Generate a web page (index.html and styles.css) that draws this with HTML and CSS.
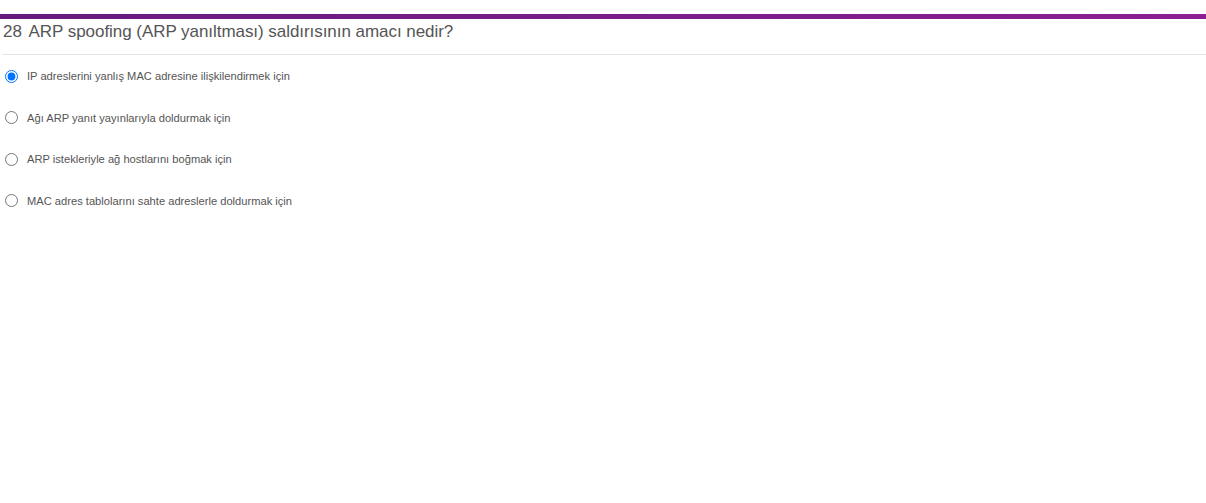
FILE: index.html
```html
<!DOCTYPE html>
<html lang="tr">
<head>
<meta charset="utf-8">
<title>Soru 28</title>
<link rel="stylesheet" href="styles.css">
</head>
<body>
<div class="page">
  <div class="topbar"></div>
  <div class="question">
    <h2 class="q-title"><span class="q-num">28</span> ARP spoofing (ARP yanıltması) saldırısının amacı nedir?</h2>
    <ul class="options">
      <li class="option"><label><input type="radio" name="q28" checked><span>IP adreslerini yanlış MAC adresine ilişkilendirmek için</span></label></li>
      <li class="option"><label><input type="radio" name="q28"><span>Ağı ARP yanıt yayınlarıyla doldurmak için</span></label></li>
      <li class="option"><label><input type="radio" name="q28"><span>ARP istekleriyle ağ hostlarını boğmak için</span></label></li>
      <li class="option"><label><input type="radio" name="q28"><span>MAC adres tablolarını sahte adreslerle doldurmak için</span></label></li>
    </ul>
  </div>
</div>
</body>
</html>
```
FILE: styles.css
```css
html, body {
  margin: 0;
  padding: 0;
  background: #fff;
}
body {
  font-family: "Liberation Sans", Arial, sans-serif;
  color: #555;
}
.page {
  padding-top: 14px;
}
.topbar {
  height: 5px;
  background: linear-gradient(to right, #661a7e, #8b1e93);
}
.question {
  padding-left: 2px;
}
.q-title {
  margin: 0;
  padding: 3px 0 0 1px;
  height: 32px;
  font-size: 17px;
  font-weight: normal;
  letter-spacing: -0.05px;
  color: #555;
  line-height: 20px;
  border-bottom: 1px solid #e6e6e6;
}
.q-num {
  margin-right: 3px;
}
.options {
  list-style: none;
  margin: 0;
  padding: 0;
}
.option {
  height: 41.5px;
}
.option:first-child {
  margin-top: 11px;
}
.option label {
  display: flex;
  align-items: center;
  gap: 9px;
  font-size: 11.15px;
  color: #555;
  height: 20px;
}
.option input {
  margin: 0 0 0 3px;
  width: 13px;
  height: 13px;
}
```
